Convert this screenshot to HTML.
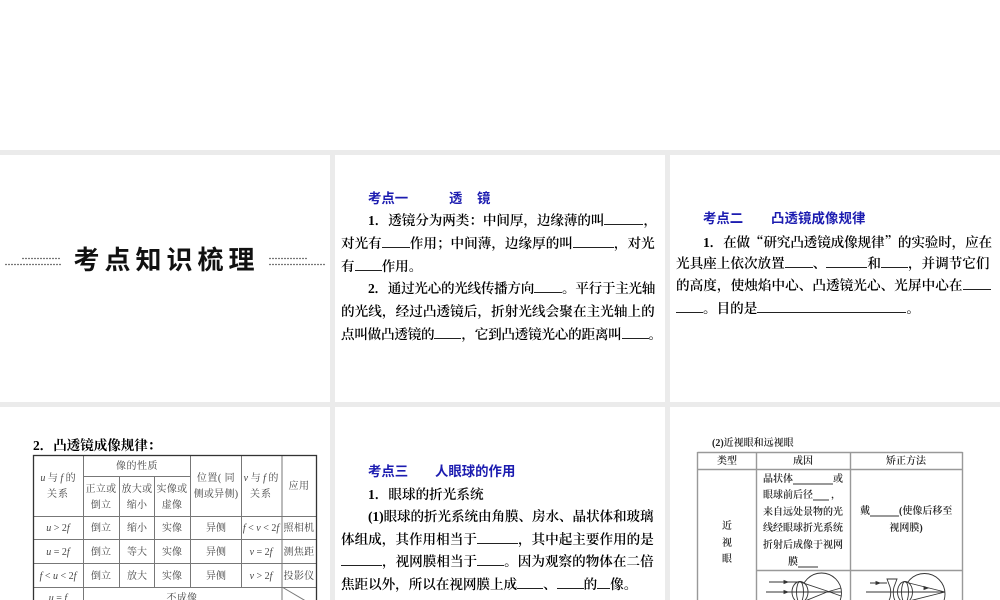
<!DOCTYPE html>
<html><head><meta charset="utf-8"><style>
html,body{margin:0;padding:0;background:#fff}
#p{position:relative;width:1000px;height:600px;overflow:hidden;background:#fff}
.bg{position:absolute;left:0;width:1000px;height:5px;background:#ebebeb}
.v{position:absolute;width:5px;background:#ebebeb}
.l{position:absolute;height:22px;line-height:22px;font-size:13.6px;color:#000;font-family:"Liberation Serif","Noto Serif CJK SC",serif;font-weight:600;white-space:nowrap;filter:blur(.35px)}
.h{position:absolute;height:22px;line-height:22px;font-size:13.4px;color:#1c1cb0;font-family:"Liberation Sans","Noto Sans CJK SC",sans-serif;font-weight:700;white-space:nowrap;filter:blur(.35px)}
.b{display:inline-block;border-bottom:1px solid #222;height:13px;vertical-align:baseline}
.q{font-family:"Noto Serif CJK SC",serif}
svg{position:absolute;left:0;top:0}
svg text{font-family:"Liberation Serif","Noto Serif CJK SC",serif}
</style></head><body><div id="p">
<div class="bg" style="top:150px"></div><div class="bg" style="top:402px"></div>
<div class="v" style="left:330px;top:150px;height:450px"></div>
<div class="v" style="left:665px;top:150px;height:450px"></div>

<svg width="1000" height="600" viewBox="0 0 1000 600" style="filter:blur(.3px)">
<g stroke="#777" stroke-width="1.300" stroke-dasharray="2 1" fill="none">
<path d="M22 258.500H61M5 264.500H61M269 258.500H308M269 264.500H325"/>
</g>
<text x="73.500" y="269" font-size="26" font-weight="700" letter-spacing="5" fill="#111" style="font-family:'Noto Sans CJK SC',sans-serif">考点知识梳理</text>
</svg>

<div class="h" style="left:368px;top:188px">考点一</div>
<div class="h" style="left:449px;top:188px">透</div>
<div class="h" style="left:477px;top:188px">镜</div>
<div class="l" style="left:368px;top:210px;letter-spacing:-.08px">1．透镜分为两类：中间厚，边缘薄的叫<span class="b" style="width:39px"></span>，</div>
<div class="l" style="left:341px;top:233px">对光有<span class="b" style="width:28px"></span>作用；中间薄，边缘厚的叫<span class="b" style="width:41px"></span>，对光</div>
<div class="l" style="left:341px;top:256px">有<span class="b" style="width:27px"></span>作用。</div>
<div class="l" style="left:368px;top:278px;letter-spacing:-.3px">2．通过光心的光线传播方向<span class="b" style="width:28px"></span>。平行于主光轴</div>
<div class="l" style="left:341px;top:301px;letter-spacing:.05px">的光线，经过凸透镜后，折射光线会聚在主光轴上的</div>
<div class="l" style="left:341px;top:324px;letter-spacing:-.25px">点叫做凸透镜的<span class="b" style="width:27px"></span>，它到凸透镜光心的距离叫<span class="b" style="width:27px"></span>。</div>

<div class="h" style="left:703px;top:208px">考点二</div>
<div class="h" style="left:771px;top:208px;letter-spacing:.1px">凸透镜成像规律</div>
<div class="l" style="left:703px;top:230px;letter-spacing:-.15px">1．在做<span class="q">“</span>研究凸透镜成像规律<span class="q">”</span>的实验时，应在</div>
<div class="l" style="left:676px;top:253px">光具座上依次放置<span class="b" style="width:28px"></span>、<span class="b" style="width:41px"></span>和<span class="b" style="width:27px"></span>，并调节它们</div>
<div class="l" style="left:676px;top:275px;letter-spacing:.05px">的高度，使烛焰中心、凸透镜光心、光屏中心在<span class="b" style="width:28px"></span></div>
<div class="l" style="left:676px;top:298px"><span class="b" style="width:27px"></span>。目的是<span class="b" style="width:149px"></span>。</div>

<div class="l" style="left:33px;top:435px;font-size:13.5px;font-weight:700">2．凸透镜成像规律：</div>

<div class="h" style="left:368px;top:461px">考点三</div>
<div class="h" style="left:435px;top:461px">人眼球的作用</div>
<div class="l" style="left:368px;top:484px">1．眼球的折光系统</div>
<div class="l" style="left:368px;top:506px;letter-spacing:-.1px"><b>(1)</b>眼球的折光系统由角膜、房水、晶状体和玻璃</div>
<div class="l" style="left:341px;top:529px">体组成，其作用相当于<span class="b" style="width:41px"></span>，其中起主要作用的是</div>
<div class="l" style="left:341px;top:551px"><span class="b" style="width:41px"></span>，视网膜相当于<span class="b" style="width:27px"></span>。因为观察的物体在二倍</div>
<div class="l" style="left:341px;top:574px;letter-spacing:-.05px">焦距以外，所以在视网膜上成<span class="b" style="width:26px"></span>、<span class="b" style="width:27px"></span>的<span class="b" style="width:13px"></span>像。</div>

<svg width="1000" height="600" viewBox="0 0 1000 600" style="filter:blur(.35px)">
<g fill="none" stroke="#777" stroke-width="1">
<path d="M83.500 455V600M190.500 455V587M241.500 455V587M282 455V600M119.500 476V587M154.500 476V587M83.500 476.500H190.500M33 516.500H316M33 539.500H316M33 563.500H316M33 587.500H316M282 587L316 607"/>
</g>
<rect x="33.500" y="455.500" width="283" height="160" fill="none" stroke="#333" stroke-width="1.300"/>
<g font-size="10" fill="#444" text-anchor="middle">
<text x="58" y="481"><tspan font-style="italic">u</tspan> 与 <tspan font-style="italic">f</tspan> 的</text>
<text x="58" y="497" letter-spacing="1">关系</text>
<text x="137" y="469" letter-spacing=".5">像的性质</text>
<text x="101" y="492" letter-spacing=".3">正立或</text><text x="101" y="508" letter-spacing=".3">倒立</text>
<text x="137" y="492" letter-spacing=".3">放大或</text><text x="137" y="508" letter-spacing=".3">缩小</text>
<text x="172" y="492" letter-spacing=".3">实像或</text><text x="172" y="508" letter-spacing=".3">虚像</text>
<text x="216" y="481" letter-spacing=".5">位置( 同</text><text x="216" y="497" letter-spacing=".3">侧或异侧)</text>
<text x="261" y="481"><tspan font-style="italic">v</tspan> 与 <tspan font-style="italic">f</tspan> 的</text>
<text x="261" y="497" letter-spacing="1">关系</text>
<text x="299" y="489" letter-spacing=".5">应用</text>
<text x="58" y="531"><tspan font-style="italic">u</tspan> &gt; 2<tspan font-style="italic">f</tspan></text>
<text x="58" y="555"><tspan font-style="italic">u</tspan> = 2<tspan font-style="italic">f</tspan></text>
<text x="58" y="579"><tspan font-style="italic">f</tspan> &lt; <tspan font-style="italic">u</tspan> &lt; 2<tspan font-style="italic">f</tspan></text>
<text x="58" y="601"><tspan font-style="italic">u</tspan> = <tspan font-style="italic">f</tspan></text>
<text x="101" y="531">倒立</text><text x="101" y="555">倒立</text><text x="101" y="579">倒立</text>
<text x="137" y="531">缩小</text><text x="137" y="555">等大</text><text x="137" y="579">放大</text>
<text x="172" y="531">实像</text><text x="172" y="555">实像</text><text x="172" y="579">实像</text>
<text x="216" y="531">异侧</text><text x="216" y="555">异侧</text><text x="216" y="579">异侧</text>
<text x="261" y="531"><tspan font-style="italic">f</tspan> &lt; <tspan font-style="italic">v</tspan> &lt; 2<tspan font-style="italic">f</tspan></text>
<text x="261" y="555"><tspan font-style="italic">v</tspan> = 2<tspan font-style="italic">f</tspan></text>
<text x="261" y="579"><tspan font-style="italic">v</tspan> &gt; 2<tspan font-style="italic">f</tspan></text>
<text x="299" y="531" letter-spacing=".3">照相机</text><text x="299" y="555" letter-spacing=".3">测焦距</text><text x="299" y="579" letter-spacing=".3">投影仪</text>
<text x="182" y="601" letter-spacing=".3">不成像</text>
</g>

<text x="712" y="446" font-size="10" fill="#222" font-weight="600">(2)近视眼和远视眼</text>
<g fill="none" stroke="#999" stroke-width="1.400">
<path d="M697.500 452.500H962.500M697.500 469.500H962.500M756.500 570.500H962.500M697.500 452V600M756.500 452V600M850.500 452V600M962.500 452V600"/>
</g>
<g font-size="10" fill="#222" text-anchor="middle" font-weight="600">
<text x="727" y="464">类型</text><text x="803" y="464">成因</text><text x="906" y="464">矫正方法</text>
<text x="727" y="529">近</text><text x="727" y="546">视</text><text x="727" y="562">眼</text>
<text x="763" y="482" text-anchor="start">晶状体</text><path d="M793 484H833" stroke="#333" fill="none"/><text x="833" y="482" text-anchor="start">或</text>
<text x="763" y="498" text-anchor="start">眼球前后径</text><path d="M813 500H829" stroke="#333" fill="none"/><text x="831" y="498" text-anchor="start">，</text>
<text x="763" y="515" text-anchor="start">来自远处景物的光</text>
<text x="763" y="531" text-anchor="start">线经眼球折光系统</text>
<text x="763" y="548" text-anchor="start">折射后成像于视网</text>
<text x="788" y="565" text-anchor="start">膜</text><path d="M798 567H818" stroke="#333" fill="none"/>
<text x="860" y="514" text-anchor="start">戴</text><path d="M870 516H899" stroke="#333" fill="none"/><text x="899" y="514" text-anchor="start">(使像后移至</text>
<text x="906" y="531">视网膜)</text>
</g>
<g fill="none" stroke="#333" stroke-width=".9">
<circle cx="821.500" cy="593" r="20"/>
<ellipse cx="800" cy="592" rx="8" ry="10.500" fill="#fff"/>
<ellipse cx="800" cy="592" rx="3.500" ry="10.500"/>
<path d="M769 582H800L827 591L841 596M766 592H841M769 603H800L827 592L841 588"/>
<path d="M788 582l-4-1.500v3zM788 592l-4-1.500v3z" fill="#333"/>
<circle cx="924.500" cy="594" r="20.500"/>
<ellipse cx="905" cy="592" rx="7.500" ry="10.500" fill="#fff"/>
<ellipse cx="905" cy="592" rx="3.500" ry="10.500"/>
<path d="M887 579H897L894 587C893 590 893 595 894 598L897 606H887L890 598C891 595 891 590 890 587Z" fill="#fff"/>
<path d="M870 583H887M905 582L945 592L905 602M866 592H945"/>
<path d="M880 583l-4-1.500v3zM928 588l-4-1.500v3z" fill="#333"/>
</g>
</svg>
</div></body></html>
